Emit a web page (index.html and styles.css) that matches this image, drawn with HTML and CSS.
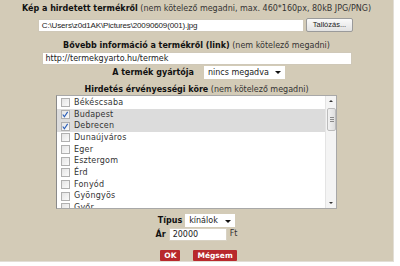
FILE: index.html
```html
<!DOCTYPE html>
<html>
  <head>
    <meta charset="utf-8">
    <title>Termék feltöltése</title>
    <link rel="stylesheet" href="styles.css">
  </head>
  <body>
    <div class="panel">
      <p class="label"><b>Kép a hirdetett termékről</b> (nem kötelező megadni, max. 460*160px, 80kB JPG/PNG)</p>
      <div class="file-row">
        <span class="field file-field">C:\Users\z0d1AK\Pictures\20090609(001).jpg</span>
        <span class="browse">Tallózás...</span>
      </div>

      <p class="label link-label"><b>Bővebb információ a termékről (link)</b> (nem kötelező megadni)</p>
      <span class="field link-field">http://termekgyarto.hu/termek</span>

      <div class="row maker-row">
        <b>A termék gyártója</b>
        <span class="select maker-select">nincs megadva<i class="caret"></i></span>
      </div>

      <p class="label area-label"><b>Hirdetés érvényességi köre</b> (nem kötelező megadni)</p>
      <div class="listbox">
        <ul class="options">
          <li><span class="check"></span>Békéscsaba</li>
          <li class="selected"><span class="check checked"><svg width="9" height="9" viewBox="0 0 9 9"><path d="M2 4.5 L3.8 7 L7.5 1.5" fill="none" stroke="#2b5fb8" stroke-width="1.3"/></svg></span>Budapest</li>
          <li class="selected"><span class="check checked"><svg width="9" height="9" viewBox="0 0 9 9"><path d="M2 4.5 L3.8 7 L7.5 1.5" fill="none" stroke="#2b5fb8" stroke-width="1.3"/></svg></span>Debrecen</li>
          <li><span class="check"></span>Dunaújváros</li>
          <li><span class="check"></span>Eger</li>
          <li><span class="check"></span>Esztergom</li>
          <li><span class="check"></span>Érd</li>
          <li><span class="check"></span>Fonyód</li>
          <li><span class="check"></span>Gyöngyös</li>
          <li><span class="check"></span>Győr</li>
        </ul>
        <div class="scrollbar">
          <span class="arrow up"></span>
          <span class="thumb"><i></i><i></i><i></i></span>
          <span class="track"></span>
          <span class="arrow down"></span>
        </div>
      </div>

      <div class="row type-row">
        <b>Típus</b>
        <span class="select type-select">kínálok<i class="caret"></i></span>
      </div>
      <div class="row price-row">
        <b>Ár</b>
        <span class="field price-field">20000</span>
        <span class="unit">Ft</span>
      </div>

      <div class="buttons">
        <span class="btn">OK</span>
        <span class="btn">Mégsem</span>
      </div>
    </div>
  </body>
</html>
```

FILE: styles.css
```css
* {
  margin: 0;
  padding: 0;
  box-sizing: border-box;
}

body {
  background-color: white;
  font-family: "DejaVu Sans", Verdana, sans-serif;
  font-size: 8px;
  color: #222;
}

.panel {
  background-color: #d3cbb7;
  width: 394px;
  height: 262px;
  border-right: 1px solid #e2ded6;
  border-bottom: 1px solid #e2ded6;
  display: flex;
  flex-direction: column;
  align-items: center;
  padding-top: 3px;
}

.label {
  line-height: 11px;
  white-space: nowrap;
  color: #333;
}

.label b {
  color: #111;
}

.field {
  background-color: white;
  border: 1px solid #cfc8b8;
  height: 13px;
  line-height: 11px;
  padding: 0 3px;
  white-space: nowrap;
  overflow: hidden;
}

.file-row {
  display: flex;
  align-items: center;
  gap: 2px;
  margin-top: 4px;
  margin-left: -2px;
}

.file-field {
  width: 266px;
  font-family: "Liberation Sans", Arial, sans-serif;
  font-size: 8px;
  letter-spacing: -0.15px;
}

.browse {
  font-family: "Liberation Sans", Arial, sans-serif;
  font-size: 7.5px;
  height: 14px;
  line-height: 12px;
  padding: 0 6px;
  border: 1px solid #9a9a9a;
  border-radius: 2px;
  background: linear-gradient(#fafafa, #e2e2e2);
  color: #222;
}

.link-label {
  margin-top: 8px;
}

.link-field {
  width: 310px;
  margin-top: 1px;
}

.row {
  display: flex;
  align-items: center;
  gap: 4px;
  white-space: nowrap;
}

.row b {
  color: #111;
}

.maker-row {
  margin-top: 1px;
  margin-left: 4px;
}

.select {
  background-color: white;
  height: 13px;
  line-height: 13px;
  padding: 0 4px;
  display: flex;
  align-items: center;
  gap: 6px;
}

.caret {
  width: 0;
  height: 0;
  border-left: 3px solid transparent;
  border-right: 3px solid transparent;
  border-top: 3px solid #111;
  margin-top: 1px;
}

.maker-select {
  margin-left: 6px;
}

.area-label {
  margin-top: 5px;
}

.listbox {
  width: 281px;
  height: 115px;
  background-color: white;
  border: 1px solid #a8a8a8;
  border-left-color: #8a8a8a;
  display: flex;
  overflow: hidden;
}

.options {
  list-style: none;
  flex: 1;
  padding-top: 1px;
}

.options li {
  height: 11.7px;
  line-height: 11.7px;
  display: flex;
  align-items: center;
  padding-left: 4px;
  gap: 4px;
  color: #333;
  letter-spacing: 0.2px;
}

.options li.selected {
  background-color: #dcdcdc;
}

.check {
  width: 9px;
  height: 9px;
  border: 1px solid #b0b0b0;
  background: linear-gradient(135deg, #e4e4e4, #fbfbfb);
  display: flex;
}

.check svg {
  margin: -1px 0 0 -1px;
}

.scrollbar {
  width: 11px;
  border-left: 1px solid #e4e4e4;
  background-color: #f4f4f4;
  display: flex;
  flex-direction: column;
}

.arrow {
  height: 11px;
  display: flex;
  align-items: center;
  justify-content: center;
}

.arrow::before {
  content: "";
  border-left: 2px solid transparent;
  border-right: 2px solid transparent;
}

.arrow.up::before {
  border-bottom: 2px solid #333;
}

.arrow.down::before {
  border-top: 2px solid #333;
}

.thumb {
  height: 23px;
  margin: 1px 0 0 1px;
  border: 1px solid #bcbcbc;
  border-radius: 2px;
  background: linear-gradient(90deg, #f2f2f2, #dedede);
  display: flex;
  flex-direction: column;
  align-items: center;
  justify-content: center;
  gap: 1px;
}

.thumb i {
  width: 4px;
  height: 1px;
  background-color: #8a8a8a;
}

.track {
  flex: 1;
}

.type-row {
  margin-top: 5px;
  gap: 3px;
}

.type-select {
  width: 50px;
  justify-content: space-between;
}

.price-row {
  margin-top: 1px;
  gap: 3px;
}

.price-field {
  width: 58px;
  border-color: #d8d2c4;
}

.unit {
  color: #333;
  margin-top: -2px;
}

.buttons {
  display: flex;
  gap: 13px;
  margin-top: 9px;
  margin-left: 4px;
}

.btn {
  background-color: #b8282c;
  color: white;
  font-weight: bold;
  font-size: 7.5px;
  height: 11px;
  line-height: 11px;
  padding: 0 4px;
  border-radius: 1px;
}
```
